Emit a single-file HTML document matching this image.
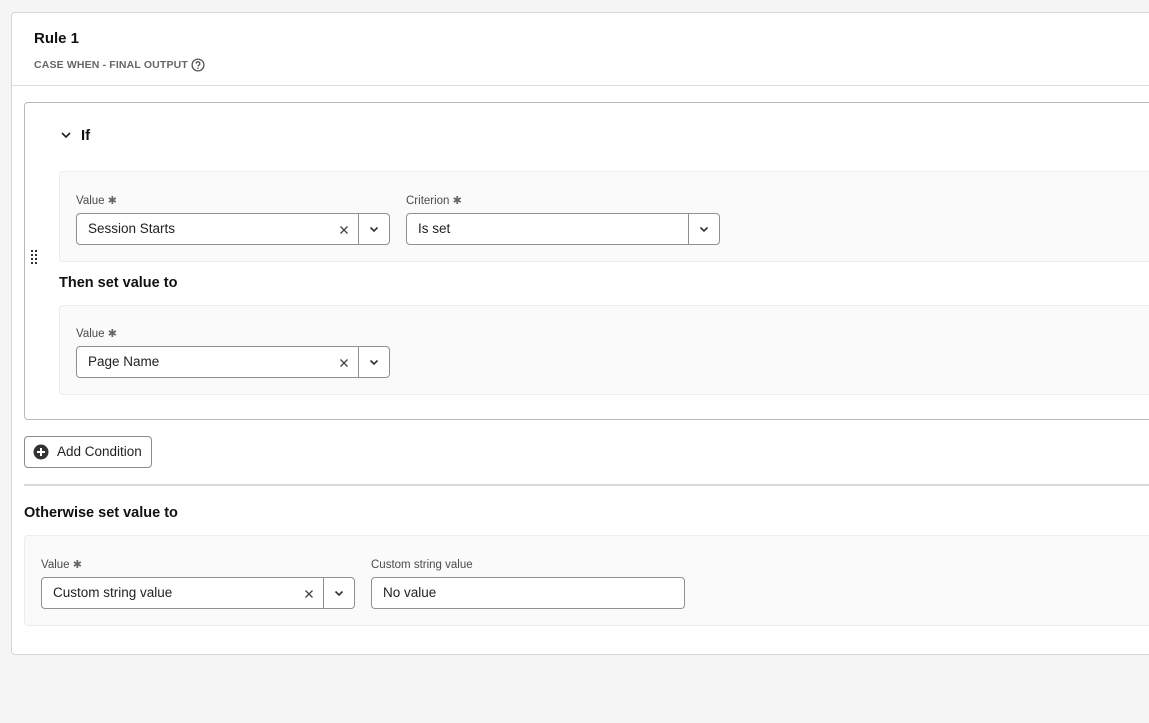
<!DOCTYPE html>
<html><head><meta charset="utf-8"><style>
*{box-sizing:border-box;margin:0;padding:0}
body{width:1149px;height:723px;background:#f5f5f5;font-family:"Liberation Sans",sans-serif;color:#222;position:relative;overflow:hidden}
.a{position:absolute}
.card{left:11px;top:12px;width:1160px;height:643px;background:#fff;border:1px solid #d5d5d5;border-radius:4px}
.lbl{font-size:11.5px;color:#4b4b4b;line-height:14px}
.st{color:#666;font-size:11px}
.fld{height:32px;border:1px solid #909090;border-radius:4px;background:#fff;font-size:13.5px;line-height:30px;padding-left:11px;color:#222}
.dd{position:absolute;right:0;top:0;width:31px;height:30px;border-left:1px solid #909090}
.x{position:absolute;top:11px}
.panel{background:#fafafa;border:1px solid #ececec;border-radius:4px}
h3{font-size:14.5px;font-weight:bold;color:#111}
</style></head><body>
<div class="a card"></div>
<div class="a" style="left:34px;top:30px;font-size:15px;font-weight:bold;color:#111">Rule 1</div>
<div class="a" style="left:34px;top:59px;font-size:10.5px;font-weight:bold;color:#666;letter-spacing:.15px">CASE WHEN - FINAL OUTPUT</div>
<svg class="a" style="left:191px;top:58px" width="14" height="14" viewBox="0 0 14 14"><circle cx="7" cy="7" r="5.9" fill="none" stroke="#555" stroke-width="1.3"/><path d="M5.2 5.6a1.8 1.8 0 1 1 2.4 1.7c-.5.2-.6.5-.6 1.1" fill="none" stroke="#555" stroke-width="1.3"/><circle cx="7" cy="10.2" r=".8" fill="#555"/></svg>
<div class="a" style="left:12px;top:85px;width:1140px;height:1px;background:#dcdcdc"></div>
<div class="a" style="left:24px;top:102px;width:1140px;height:318px;border:1px solid #b8b8b8;border-radius:4px;background:#fff"></div>
<svg class="a" style="left:60px;top:129px" width="12" height="12" viewBox="0 0 12 12"><path d="M2 4l4 4 4-4" fill="none" stroke="#222" stroke-width="1.6"/></svg>
<div class="a" style="left:81px;top:127px;font-size:15px;font-weight:bold;color:#111">If</div>
<svg class="a" style="left:30px;top:249px" width="8" height="16" viewBox="0 0 8 16"><g fill="#333"><rect x="1" y="1" width="2" height="2"/><rect x="5" y="1" width="2" height="2"/><rect x="1" y="5" width="2" height="2"/><rect x="5" y="5" width="2" height="2"/><rect x="1" y="9" width="2" height="2"/><rect x="5" y="9" width="2" height="2"/><rect x="1" y="13" width="2" height="2"/><rect x="5" y="13" width="2" height="2"/></g></svg>
<div class="a panel" style="left:59px;top:171px;width:1100px;height:91px"></div>
<div class="a lbl" style="left:76px;top:194px">Value <span class="st">✱</span></div>
<div class="a fld" style="left:76px;top:213px;width:314px">Session Starts<svg class="x" style="right:40px" width="10" height="10" viewBox="0 0 10 10"><path d="M1.5 1.5l7 7M8.5 1.5l-7 7" stroke="#444" stroke-width="1.3"/></svg><span class="dd"><svg style="position:absolute;left:10px;top:10px" width="10" height="10" viewBox="0 0 10 10"><path d="M1.5 3.5l3.5 3.5 3.5-3.5" fill="none" stroke="#333" stroke-width="1.6"/></svg></span></div>
<div class="a lbl" style="left:406px;top:194px">Criterion <span class="st">✱</span></div>
<div class="a fld" style="left:406px;top:213px;width:314px">Is set<span class="dd"><svg style="position:absolute;left:10px;top:10px" width="10" height="10" viewBox="0 0 10 10"><path d="M1.5 3.5l3.5 3.5 3.5-3.5" fill="none" stroke="#333" stroke-width="1.6"/></svg></span></div>
<h3 class="a" style="left:59px;top:275px">Then set value to</h3>
<div class="a panel" style="left:59px;top:305px;width:1100px;height:90px"></div>
<div class="a lbl" style="left:76px;top:327px">Value <span class="st">✱</span></div>
<div class="a fld" style="left:76px;top:346px;width:314px">Page Name<svg class="x" style="right:40px" width="10" height="10" viewBox="0 0 10 10"><path d="M1.5 1.5l7 7M8.5 1.5l-7 7" stroke="#444" stroke-width="1.3"/></svg><span class="dd"><svg style="position:absolute;left:10px;top:10px" width="10" height="10" viewBox="0 0 10 10"><path d="M1.5 3.5l3.5 3.5 3.5-3.5" fill="none" stroke="#333" stroke-width="1.6"/></svg></span></div>
<div class="a" style="left:24px;top:436px;width:128px;height:32px;border:1px solid #8a8a8a;border-radius:4px;background:#fff"></div>
<svg class="a" style="left:33px;top:444px" width="16" height="16" viewBox="0 0 16 16"><circle cx="8" cy="8" r="7.5" fill="#333"/><path d="M8 4v8M4 8h8" stroke="#fff" stroke-width="2"/></svg>
<div class="a" style="left:57px;top:444px;font-size:13.5px;color:#222">Add Condition</div>
<div class="a" style="left:24px;top:484px;width:1130px;height:2px;background:#d8d8d8"></div>
<h3 class="a" style="left:24px;top:505px">Otherwise set value to</h3>
<div class="a panel" style="left:24px;top:535px;width:1135px;height:91px"></div>
<div class="a lbl" style="left:41px;top:558px">Value <span class="st">✱</span></div>
<div class="a fld" style="left:41px;top:577px;width:314px">Custom string value<svg class="x" style="right:40px" width="10" height="10" viewBox="0 0 10 10"><path d="M1.5 1.5l7 7M8.5 1.5l-7 7" stroke="#444" stroke-width="1.3"/></svg><span class="dd"><svg style="position:absolute;left:10px;top:10px" width="10" height="10" viewBox="0 0 10 10"><path d="M1.5 3.5l3.5 3.5 3.5-3.5" fill="none" stroke="#333" stroke-width="1.6"/></svg></span></div>
<div class="a lbl" style="left:371px;top:558px">Custom string value</div>
<div class="a fld" style="left:371px;top:577px;width:314px">No value</div>
</body></html>
